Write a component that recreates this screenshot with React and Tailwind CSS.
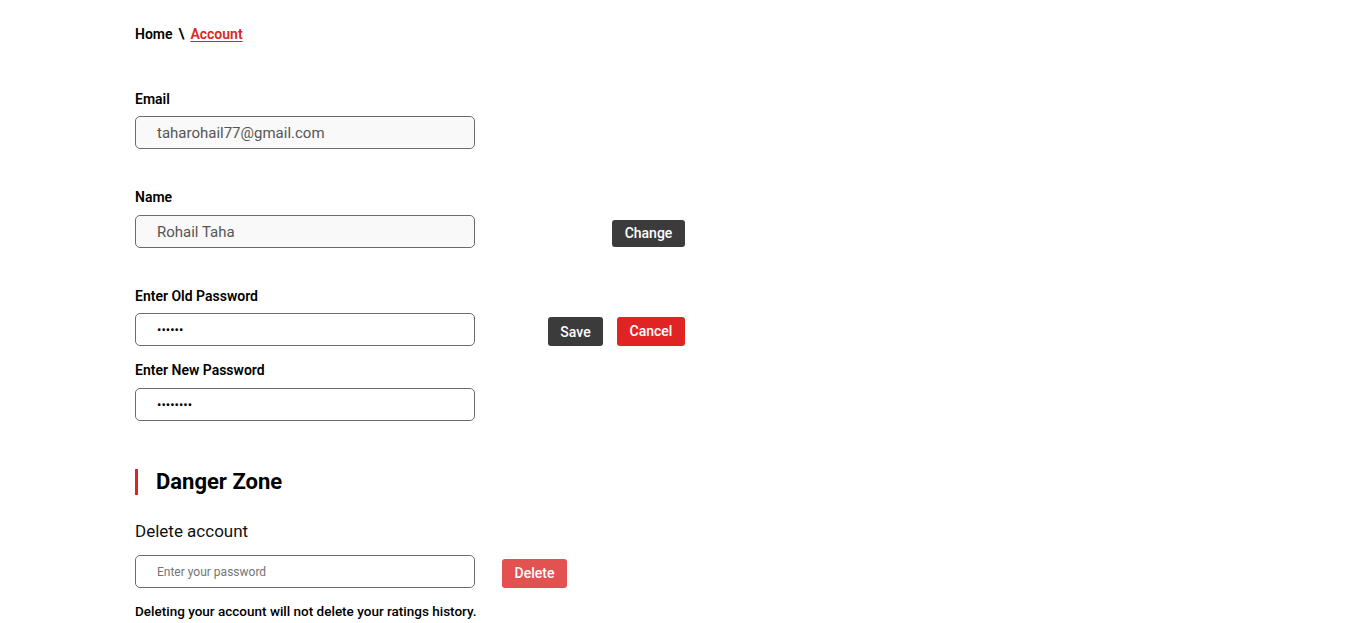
import React, { useState } from 'react';

const inputBase =
  'w-[340px] h-[33px] rounded-[5px] border border-[#6b6b6b] pl-[21px] pr-3 outline-none';

const Label = ({ children }) => (
  <label className="block h-5 text-[14px] leading-5 font-semibold text-black">{children}</label>
);

const Account = () => {
  const [oldPass, setOldPass] = useState('123456');
  const [newPass, setNewPass] = useState('12345678');
  const [deletePass, setDeletePass] = useState('');

  return (
    <div className="min-h-screen bg-white font-['Roboto',sans-serif] text-black">
      <div className="pl-[135px] pt-6 w-[685px]">
        {/* Breadcrumb */}
        <div className="flex items-center h-5 text-[14px] font-semibold">
          <span>Home</span>
          <span className="mx-[6px]">\</span>
          <a href="#" className="text-[#dc2626] underline underline-offset-2">Account</a>
        </div>

        {/* Email */}
        <div className="mt-[45px]">
          <Label>Email</Label>
          <input
            readOnly
            value="taharohail77@gmail.com"
            className={`${inputBase} text-[15px] mt-[7px] bg-[#f9f9f9] text-[#555555]`}
          />
        </div>

        {/* Name */}
        <div className="mt-[38px]">
          <Label>Name</Label>
          <div className="flex items-start justify-between mt-[8px]">
            <input
              readOnly
              value="Rohail Taha"
              className={`${inputBase} text-[15px] bg-[#f9f9f9] text-[#555555]`}
            />
            <button className="mt-[5px] h-[27px] w-[73px] rounded-[3px] bg-[#3b3b3b] text-white text-[14px] font-medium">
              Change
            </button>
          </div>
        </div>

        {/* Passwords */}
        <div className="mt-[38px]">
          <Label>Enter Old Password</Label>
          <div className="flex items-start justify-between mt-[7px]">
            <input
              type="password"
              value={oldPass}
              onChange={(e) => setOldPass(e.target.value)}
              className={`${inputBase} bg-white text-black text-[13px]`}
            />
            <div className="flex gap-[14px] mt-[4px]">
              <button className="h-[29px] w-[55px] rounded-[3px] bg-[#3b3b3b] text-white text-[14px] font-medium pt-[2px]">
                Save
              </button>
              <button className="h-[29px] w-[68px] rounded-[3px] bg-[#e02424] text-white text-[14px] font-medium pb-[1px]">
                Cancel
              </button>
            </div>
          </div>
          <div className="mt-[14px]">
            <Label>Enter New Password</Label>
            <input
              type="password"
              value={newPass}
              onChange={(e) => setNewPass(e.target.value)}
              className={`${inputBase} mt-[8px] bg-white text-black text-[13px]`}
            />
          </div>
        </div>

        {/* Danger Zone */}
        <div className="mt-[48px] flex items-center h-[26px] border-l-[3px] border-[#dc2626] pl-[18px]">
          <h2 className="text-[22px] font-bold leading-none">Danger Zone</h2>
        </div>

        <div className="mt-[24px] text-[17px] leading-6 text-[#111111]">Delete account</div>

        <div className="flex items-start mt-[12px]">
          <input
            type="password"
            placeholder="Enter your password"
            value={deletePass}
            onChange={(e) => setDeletePass(e.target.value)}
            className={`${inputBase} bg-white text-[12px] placeholder:text-[#757575]`}
          />
          <button className="ml-[27px] mt-[4px] h-[29px] w-[65px] rounded-[3px] bg-[#e35151] text-white text-[14px] font-medium">
            Delete
          </button>
        </div>

        <p className="mt-[13px] text-[13.5px] leading-5 font-medium text-black">
          Deleting your account will not delete your ratings history.
        </p>
      </div>
    </div>
  );
};

export default Account;
